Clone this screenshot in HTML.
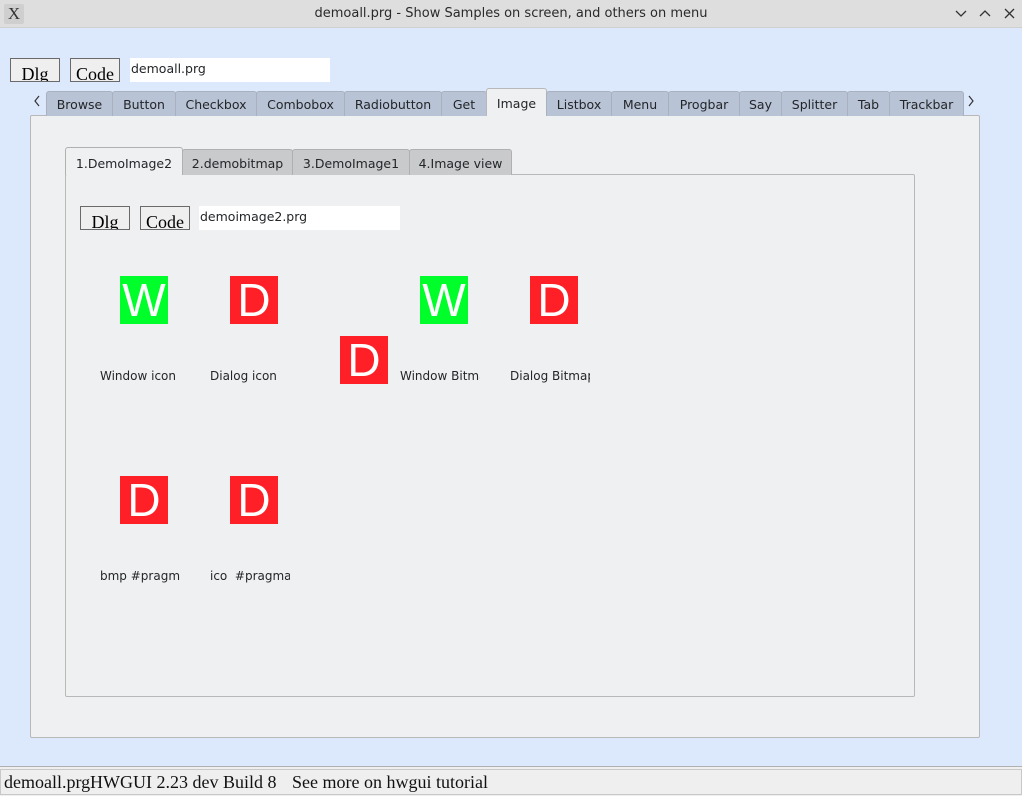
<!DOCTYPE html>
<html><head><style>
*{margin:0;padding:0;box-sizing:border-box}
body{width:1022px;height:796px;background:#dce8fb;position:relative;overflow:hidden;font-family:"DejaVu Sans","Liberation Sans",sans-serif;font-size:13px;color:#232629}
.a{position:absolute}
.title{left:0;top:0;width:1022px;height:28px;background:#dedede;border-bottom:1px solid #d0d0d0}
.btn{background:#efefef;border:1px solid #6a6a6a;font-family:"Liberation Serif",serif;font-size:18px;color:#000;text-align:center;line-height:30px;height:24px;overflow:hidden}
.edit{background:#fff;font-size:12.5px;padding-left:1px;line-height:22px}
.tab{top:91px;height:25px;background:#b8c3d6;border:1px solid #a9b1bf;border-bottom:none;border-radius:3px 3px 0 0;text-align:center;line-height:26px;font-size:12.5px;white-space:nowrap}
.itab{top:149px;height:26px;background:#c9cacc;border:1px solid #b0b0b0;border-bottom:none;border-radius:3px 3px 0 0;text-align:center;line-height:28px;font-size:12.5px;white-space:nowrap}
.sq{width:48px;height:48px;color:#fff;font-family:"Liberation Sans",sans-serif;font-size:46px;text-align:center;line-height:48px}
.g{background:#00ff2a}.r{background:#ff1f27}
.lb{font-size:12px;white-space:nowrap;overflow:hidden}
.st{font-family:'Liberation Serif',serif;font-size:18px;color:#111;white-space:nowrap;top:772px}
</style></head><body>
<div class="a title"></div>
<div class="a" style="left:4px;top:4px;width:20px;height:20px;background:#cfcfcf;border-radius:2px;font-family:'Liberation Serif',serif;font-size:17px;line-height:19px;text-align:center;color:#333">X</div>
<div class="a" style="left:0;width:1022px;top:6px;text-align:center;font-size:13px;color:#2a2a2a">demoall.prg - Show Samples on screen, and others on menu</div>
<svg class="a" style="left:950px;top:6px" width="70" height="16" fill="none" stroke="#333" stroke-width="1.3"><path d="M6 5l5 5 5-5"/><path d="M30 10l5-5 5 5"/><path d="M55 3l9 9M64 3l-9 9"/></svg>

<div class="a btn" style="left:10px;top:58px;width:50px">Dlg</div>
<div class="a btn" style="left:70px;top:58px;width:50px">Code</div>
<div class="a edit" style="left:130px;top:58px;width:200px;height:24px">demoall.prg</div>

<svg class="a" style="left:32px;top:94px" width="10" height="14" fill="none" stroke="#333" stroke-width="1.2"><path d="M7 2l-4 5 4 5"/></svg>
<svg class="a" style="left:966px;top:94px" width="10" height="14" fill="none" stroke="#333" stroke-width="1.2"><path d="M3 2l4 5-4 5"/></svg>

<div class="a" style="left:30px;top:115px;width:950px;height:623px;background:#eff0f1;border:1px solid #b8b8b8;border-radius:2px"></div>
<div class="a tab" style="left:46px;width:67px">Browse</div>
<div class="a tab" style="left:112px;width:64px">Button</div>
<div class="a tab" style="left:175px;width:82px">Checkbox</div>
<div class="a tab" style="left:256px;width:89px">Combobox</div>
<div class="a tab" style="left:344px;width:98px">Radiobutton</div>
<div class="a tab" style="left:441px;width:46px">Get</div>
<div class="a tab" style="left:486px;width:61px;top:88px;height:28px;background:#eff0f1;border-color:#b8b8b8;line-height:29px">Image</div>
<div class="a tab" style="left:546px;width:66px">Listbox</div>
<div class="a tab" style="left:611px;width:58px">Menu</div>
<div class="a tab" style="left:668px;width:72px">Progbar</div>
<div class="a tab" style="left:739px;width:43px">Say</div>
<div class="a tab" style="left:781px;width:67px">Splitter</div>
<div class="a tab" style="left:847px;width:43px">Tab</div>
<div class="a tab" style="left:889px;width:75px">Trackbar</div>

<div class="a" style="left:65px;top:174px;width:850px;height:523px;border:1px solid #b8b8b8;border-radius:2px"></div>
<div class="a itab" style="left:65px;width:118px;top:147px;height:28px;background:#eff0f1;line-height:31px">1.DemoImage2</div>
<div class="a itab" style="left:182px;width:111px">2.demobitmap</div>
<div class="a itab" style="left:292px;width:118px">3.DemoImage1</div>
<div class="a itab" style="left:409px;width:103px">4.Image view</div>

<div class="a btn" style="left:80px;top:206px;width:50px">Dlg</div>
<div class="a btn" style="left:140px;top:206px;width:50px">Code</div>
<div class="a edit" style="left:199px;top:206px;width:201px;height:24px">demoimage2.prg</div>

<div class="a sq g" style="left:120px;top:276px">W</div>
<div class="a sq r" style="left:230px;top:276px">D</div>
<div class="a sq r" style="left:340px;top:336px">D</div>
<div class="a sq g" style="left:420px;top:276px">W</div>
<div class="a sq r" style="left:530px;top:276px">D</div>
<div class="a lb" style="left:100px;top:369px;width:80px">Window icon</div>
<div class="a lb" style="left:210px;top:369px;width:80px">Dialog icon</div>
<div class="a lb" style="left:400px;top:369px;width:80px">Window Bitmap</div>
<div class="a lb" style="left:510px;top:369px;width:80px">Dialog Bitmap</div>

<div class="a sq r" style="left:120px;top:476px">D</div>
<div class="a sq r" style="left:230px;top:476px">D</div>
<div class="a lb" style="left:100px;top:569px;width:80px">bmp #pragma</div>
<div class="a lb" style="left:210px;top:569px;width:80px">ico&nbsp; #pragma</div>

<div class="a" style="left:0;top:766px;width:1022px;height:30px;background:#efefef;border-top:1px solid #b0b0b0"></div>
<div class="a" style="left:0;top:769px;width:1022px;height:26px;border:1px solid #c8c8c8"></div>
<div class="a st" style="left:4px">demoall.prg</div>
<div class="a st" style="left:90px">HWGUI 2.23 dev Build 8</div>
<div class="a st" style="left:292px">See more on hwgui tutorial</div>
</body></html>
